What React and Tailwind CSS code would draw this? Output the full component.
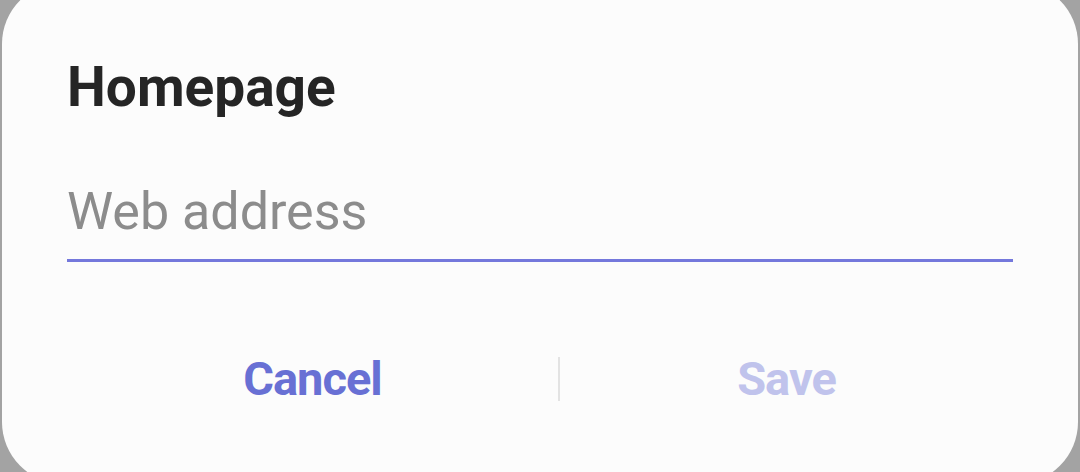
import React from "react";

const App = () => {
  return (
    <div className="h-[472px] w-[1080px] overflow-hidden bg-[#a3a3a3] px-[2px] font-['Roboto',sans-serif]">
      <div className="-mt-[18px] h-[502px] rounded-[62px] bg-[#fcfcfc] px-[65px] pt-[78px]">
        <h2 className="text-[55px] font-bold leading-none text-[#252525]">Homepage</h2>
        <div className="mt-[66px] border-b-[3px] border-[#7478dc] pb-[17px]">
          <input
            type="text"
            placeholder="Web address"
            className="w-full bg-transparent text-[52px] leading-none text-[#252525] outline-none placeholder:text-[#8c8c8c]"
          />
        </div>
        <div className="mt-[93px] flex items-center">
          <button type="button" className="w-[491px] text-[47px] font-bold leading-none tracking-[-1px] text-[#6870d4]">
            Cancel
          </button>
          <div className="h-[44px] w-[2px] bg-[#e3e3e3]"></div>
          <button type="button" className="flex-1 text-[47px] font-bold leading-none tracking-[-1px] text-[#c0c3ec]">
            Save
          </button>
        </div>
      </div>
    </div>
  );
};

export default App;
